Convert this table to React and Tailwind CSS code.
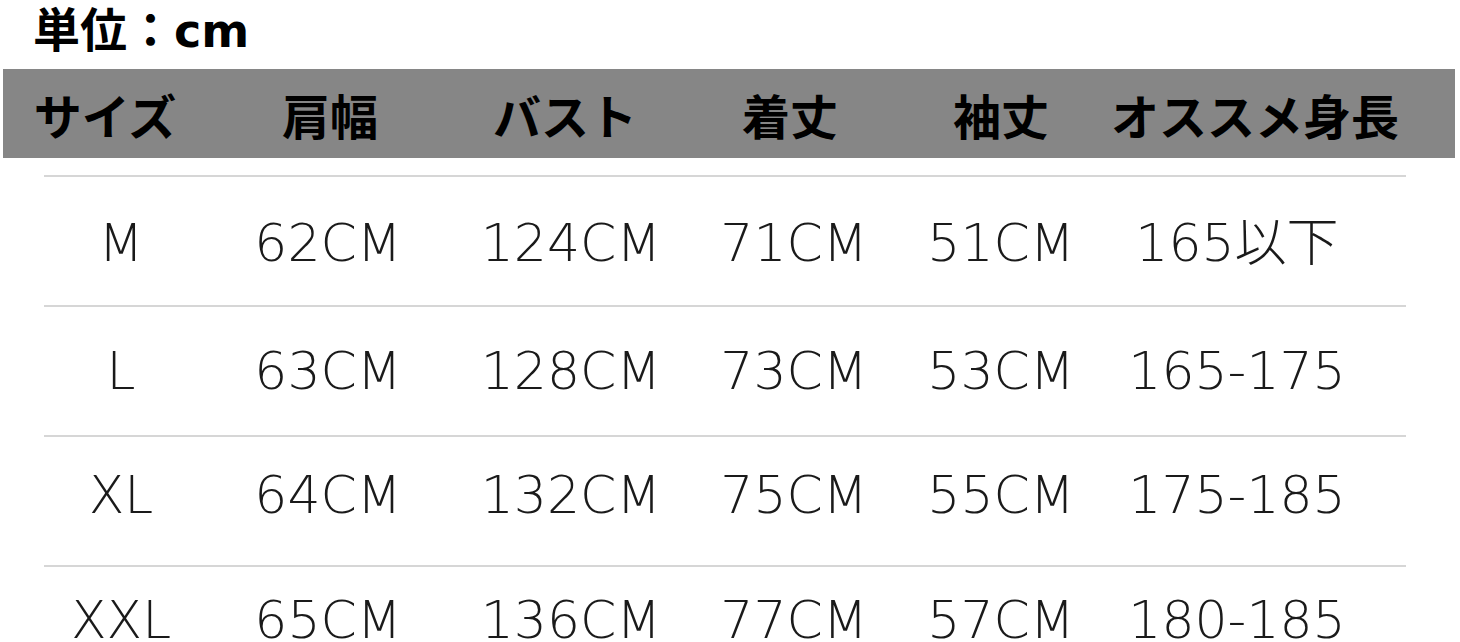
const headers = ["サイズ", "肩幅", "バスト", "着丈", "袖丈", "オススメ身長"];

const rows = [
  { cells: ["M", "62CM", "124CM", "71CM", "51CM", "165以下"], pad: "pt-[40px]" },
  { cells: ["L", "63CM", "128CM", "73CM", "53CM", "165-175"], pad: "pt-[38px]" },
  { cells: ["XL", "64CM", "132CM", "75CM", "55CM", "175-185"], pad: "pt-[32px]" },
  { cells: ["XXL", "65CM", "136CM", "77CM", "57CM", "180-185"], pad: "pt-[27px]" },
];

const headCols = "grid grid-cols-[204px_246px_224px_226px_196px_312px]";
const bodyCols = "grid grid-cols-[154px_260px_226px_220px_194px_278px]";

function App() {
  return (
    <div
      className="h-[642px] w-[1460px] overflow-hidden bg-white text-black"
      style={{ fontFamily: '"Noto Sans CJK JP", "Noto Sans", sans-serif' }}
    >
      <div className="flex h-[69px] items-start pl-[33px]">
        <h1 className="text-[47px] font-bold leading-[54px]">
          単位：<span style={{ fontFamily: '"DejaVu Sans", sans-serif' }} className="text-[46px]">cm</span>
        </h1>
      </div>

      <div className={`${headCols} ml-[3px] h-[89px] w-[1452px] items-center bg-[#868686]`}>
        {headers.map((h) => (
          <div key={h} className="text-center text-[48px] font-bold leading-none">
            {h}
          </div>
        ))}
      </div>

      <div className="ml-[44px] mt-[17px] w-[1362px]">
        {rows.map((row) => (
          <div key={row.cells[0]} className={`h-[130px] border-t-2 border-[#d6d6d6] ${row.pad}`}>
            <div
              className={`${bodyCols} items-center text-[52px] font-extralight leading-none text-[#1a1a1a]`}
              style={{ fontFamily: '"DejaVu Sans", "Noto Sans CJK JP", sans-serif' }}
            >
              {row.cells.map((c, i) => (
                <div key={i} className="text-center">
                  {c}
                </div>
              ))}
            </div>
          </div>
        ))}
      </div>
    </div>
  );
}

export default App;
